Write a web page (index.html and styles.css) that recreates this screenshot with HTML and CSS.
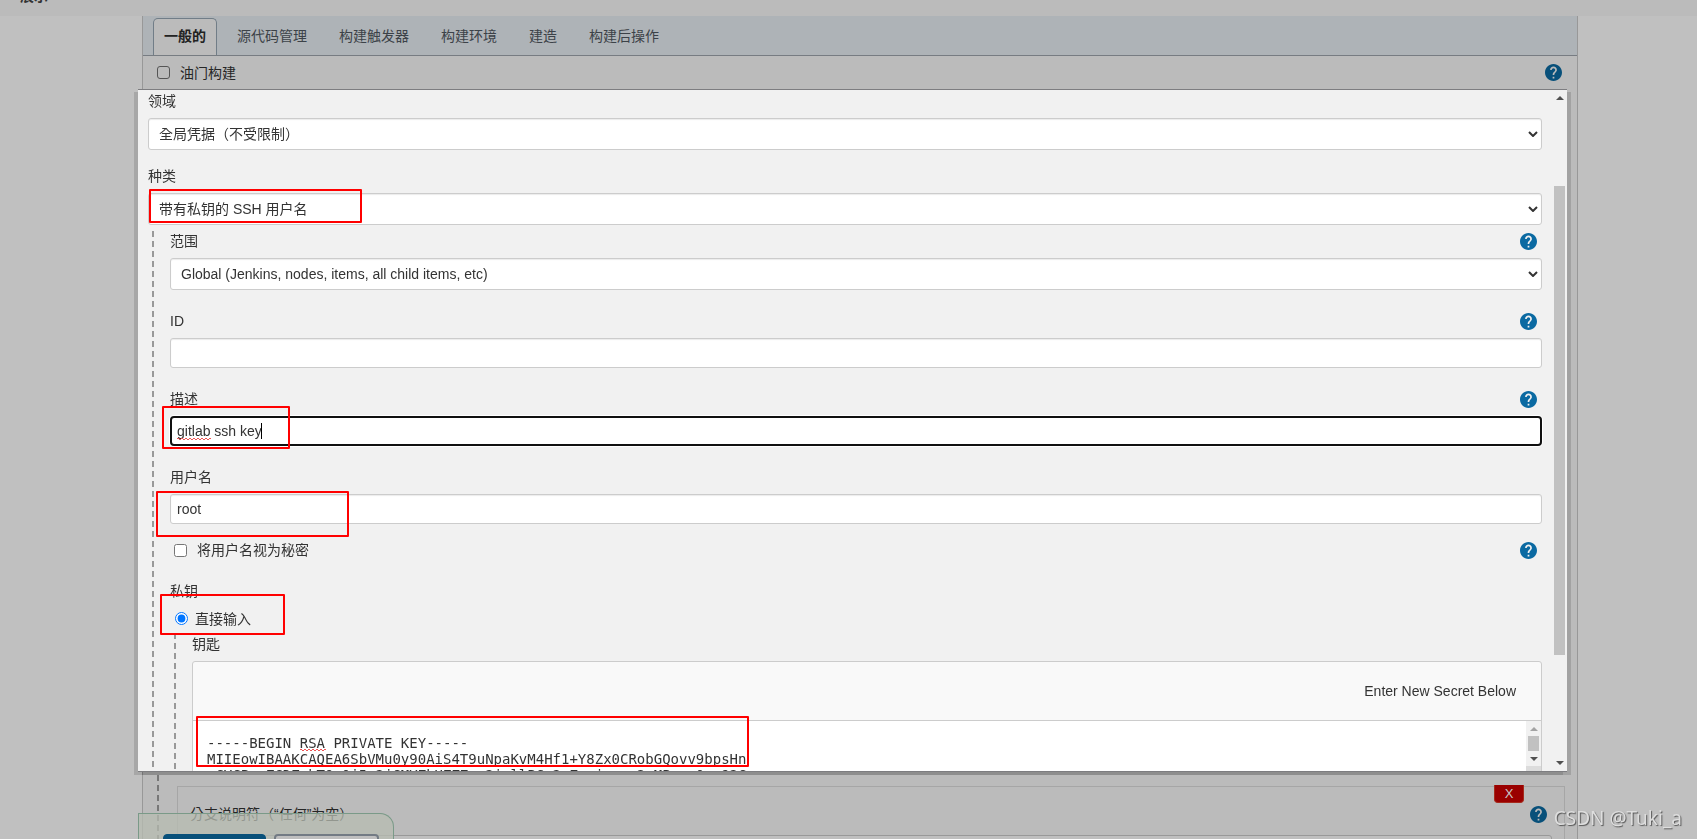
FILE: index.html
```html
<!DOCTYPE html>
<html lang="zh-CN">
<head>
<meta charset="utf-8">
<title>展示</title>
<link rel="stylesheet" href="styles.css">
</head>
<body>
<svg class="defs" aria-hidden="true">
  <symbol id="help" viewBox="2 2 20 20"><path fill="currentColor" d="M12 2C6.480 2 2 6.480 2 12s4.480 10 10 10 10-4.480 10-10S17.520 2 12 2zm1 17h-2v-2h2v2zm2.070-7.750l-.9.920C13.450 12.900 13 13.500 13 15h-2v-.5c0-1.100.45-2.100 1.170-2.830l1.240-1.260c.37-.36.590-.86.590-1.410 0-1.100-.9-2-2-2s-2 .9-2 2H8c0-2.210 1.790-4 4-4s4 1.790 4 4c0 .88-.36 1.680-.93 2.250z"/></symbol>
</svg>

<div class="page">
  <header class="breadcrumb"><span>展示 ›</span></header>
  <main class="config">
    <nav class="tabs">
      <a class="tab tab-active" href="#general">一般的</a>
      <a class="tab" href="#scm">源代码管理</a>
      <a class="tab" href="#triggers">构建触发器</a>
      <a class="tab" href="#env">构建环境</a>
      <a class="tab" href="#build">建造</a>
      <a class="tab" href="#post">构建后操作</a>
    </nav>
    <div class="option-row">
      <input type="checkbox" id="throttle"><label for="throttle">油门构建</label>
      <button class="help" aria-label="帮助"><svg><use href="#help"/></svg></button>
    </div>
    <section class="branches">
      <div class="branches-head"><span>构建分支</span><button class="help" aria-label="帮助"><svg><use href="#help"/></svg></button></div>
      <div class="branch">
        <button class="remove">X</button>
        <div class="branch-label"><label class="wide-parens" lang="zh-Hant" for="branch">分支说明符（“任何”为空）</label><button class="help" aria-label="帮助"><svg><use href="#help"/></svg></button></div>
        <input class="branch-input" id="branch" type="text">
      </div>
    </section>
  </main>
</div>

<div class="save-bar"><button class="save">保存</button><button class="apply">应用</button></div>

<div class="dialog" role="dialog" aria-label="添加凭据">
  <form class="form">
    <div class="field">
      <div class="field-head"><label for="domain">领域</label></div>
      <div class="select-wrap"><select class="wide-parens" lang="zh-Hant" id="domain"><option>全局凭据（不受限制）</option></select><svg class="chevron" viewBox="0 0 10 6"><path d="M1 1l4 4 4-4"/></svg></div>
    </div>
    <div class="field">
      <div class="field-head"><label for="kind">种类</label></div>
      <div class="select-wrap"><select id="kind"><option>带有私钥的 SSH 用户名</option></select><svg class="chevron" viewBox="0 0 10 6"><path d="M1 1l4 4 4-4"/></svg></div>
    </div>
    <div class="nest">
      <div class="nest-field">
        <div class="field-head"><label for="scope">范围</label><button type="button" class="help" aria-label="帮助"><svg><use href="#help"/></svg></button></div>
        <div class="select-wrap"><select id="scope"><option>Global (Jenkins, nodes, items, all child items, etc)</option></select><svg class="chevron" viewBox="0 0 10 6"><path d="M1 1l4 4 4-4"/></svg></div>
      </div>
      <div class="nest-field">
        <div class="field-head"><label for="cid">ID</label><button type="button" class="help" aria-label="帮助"><svg><use href="#help"/></svg></button></div>
        <input class="text" id="cid" type="text">
      </div>
      <div class="nest-field">
        <div class="field-head"><label for="desc">描述</label><button type="button" class="help" aria-label="帮助"><svg><use href="#help"/></svg></button></div>
        <div class="text-wrap"><input class="text text-focus" id="desc" type="text" value="gitlab ssh key" spellcheck="false"><span class="squiggle squiggle-desc"></span><span class="caret"></span></div>
      </div>
      <div class="nest-field">
        <div class="field-head"><label for="user">用户名</label></div>
        <input class="text" id="user" type="text" value="root" spellcheck="false">
      </div>
      <div class="check-row">
        <input type="checkbox" id="secret"><label for="secret">将用户名视为秘密</label>
        <button type="button" class="help" aria-label="帮助"><svg><use href="#help"/></svg></button>
      </div>
      <div class="nest-field">
        <div class="field-head"><span>私钥</span></div>
        <div class="radio-row"><input type="radio" id="direct" name="source" checked><label for="direct">直接输入</label></div>
      </div>
      <div class="nest">
        <div class="field-head"><label for="key">钥匙</label></div>
        <div class="secret">
          <div class="secret-head">Enter New Secret Below</div>
          <div class="secret-body">
            <textarea id="key" wrap="off" spellcheck="false">-----BEGIN RSA PRIVATE KEY-----
MIIEowIBAAKCAQEA6SbVMu0y90AiS4T9uNpaKvM4Hf1+Y8Zx0CRobGQovv9bpsHn
sCYCPs+ZCDZuhTOs0j5n2jGMYZhHZZZxs2jsllPCs2nZuvjxnsn2sMPrus0xs92C</textarea>
            <span class="squiggle squiggle-key"></span>
            <div class="mini-scroll"><i class="arrow up muted"></i><i class="mini-thumb"></i><i class="arrow down"></i><i class="corner"></i></div>
          </div>
        </div>
      </div>
    </div>
  </form>
  <div class="scrollbar"><i class="arrow up"></i><div class="track"><i class="before"></i><i class="thumb"></i><i class="after"></i></div><i class="arrow down"></i></div>
</div>

<div class="mark mark-kind"></div>
<div class="mark mark-desc"></div>
<div class="mark mark-user"></div>
<div class="mark mark-direct"></div>
<div class="mark mark-key"></div>
<div class="watermark">CSDN @Tuki_a</div>
</body>
</html>
```
FILE: styles.css
```css
* { box-sizing: border-box; }
body {
  margin: 0;
  background: #c0c0c0;
  color: #333;
  font: 14px/18px "Liberation Sans", "Noto Sans CJK SC", sans-serif;
  overflow: hidden;
}
.defs { position: absolute; width: 0; height: 0; }
button, input, select, textarea { font: inherit; color: inherit; margin: 0; }
.wide-parens { font-family: "Liberation Sans", "Noto Sans CJK TC", sans-serif; }
.page { display: flex; flex-direction: column; height: 100vh; overflow: hidden; }

.breadcrumb {
  display: flex;
  align-items: flex-end;
  flex: none;
  height: 16px;
  padding: 0 20px 11px;
  background: #bbb;
  font-weight: bold;
  overflow: hidden;
}
.config {
  display: flex;
  flex-direction: column;
  flex: 1;
  min-height: 0;
  margin: 0 119px 0 142px;
  background: #bbb;
  border: solid #989898;
  border-width: 0 1px;
}
.tabs {
  display: flex;
  flex: none;
  height: 40px;
  padding: 2px 10px 0;
  background: #aeb3b7;
  border-bottom: 1px solid #777c82;
  gap: 8px;
}
.tab { padding: 9px 12px; color: #3c4248; text-decoration: none; line-height: 18px; }
.tab-active {
  padding: 8px 10px;
  background: #bbb;
  border: 1px solid #717d87;
  border-bottom: 0;
  border-radius: 5px 5px 0 0;
  color: #222;
  font-weight: bold;
}
.option-row { display: flex; align-items: center; height: 32px; padding: 0 15px 0 14px; }
.option-row input { width: 13px; height: 13px; margin-right: 10px; appearance: none; border: 1px solid #555; border-radius: 3px; }
.option-row label { color: #262626; padding-top: 1px; }

.help { display: block; flex: none; width: 17px; height: 17px; margin-left: auto; padding: 0; border: 0; background: none; color: #0b6aa2; }
.help svg { display: block; width: 17px; height: 17px; }
.config .help { color: #08507a; }

.branches {
  margin: auto 12px 0 14px;
  height: 84px;
  padding-left: 17px;
  background: repeating-linear-gradient(#777 0 6px, transparent 6px 10px) 0 0 / 2px 100% no-repeat;
}
.branches-head { display: flex; color: #262626; height: 31px; }
.branch { margin-left: 3px; border: 1px solid #a6a6a6; height: 200px; padding: 0 12px; }
.remove {
  display: block;
  width: 30px;
  height: 18px;
  margin: -2px 28px 0 auto;
  padding: 0;
  border: 1px solid #a52a1c;
  border-top: 0;
  border-radius: 0 0 4px 4px;
  background: #9a0000;
  color: #c8c8c8;
  font-size: 13px;
  line-height: 15px;
}
.branch-label { display: flex; align-items: center; height: 18px; margin: 2px 5px 12px 0; color: #262626; }
.branch-input { width: 100%; height: 30px; border: 1px solid #999; border-radius: 3px; background: #bfbfbf; }

.save-bar {
  position: fixed;
  left: 138px;
  bottom: 0;
  display: flex;
  gap: 8px;
  width: 256px;
  height: 26px;
  padding: 20px 14px 0 24px;
  border: 1px solid #7a9a88;
  border-bottom: 0;
  border-radius: 0 14px 0 0;
  background: rgba(183, 188, 178, .75);
  overflow: hidden;
}
.save-bar button { flex: 1; height: 32px; border-radius: 4px; }
.save { border: 1px solid #08507a; background: #08507a; color: #ddd; }
.apply { border: 2px solid #737b84; background: #bfbfbf; }

.dialog {
  position: fixed;
  top: 89px;
  right: 130px;
  bottom: 67px;
  left: 138px;
  display: flex;
  background: #f1f1f1;
  border: solid #7d7d80;
  border-width: 1px 0;
  box-shadow: -4px 3px 0 rgba(0, 0, 0, .13), 4px 3px 0 rgba(0, 0, 0, .13);
}
.form { flex: 1; min-width: 0; padding: 2px 10px 0; overflow: hidden; }
.field { margin-bottom: 17px; }
.field-head { display: flex; align-items: center; height: 18px; margin-bottom: 8px; padding-right: 5px; }
.select-wrap, .text-wrap { position: relative; display: flex; }
select {
  width: 100%;
  height: 32px;
  padding: 0 10px;
  appearance: none;
  border: 1px solid #ccc;
  border-radius: 3px;
  background: #fff;
  box-shadow: inset 0 1px 1px rgba(0, 0, 0, .08);
}
.chevron { position: absolute; right: 4px; top: 13px; width: 10px; height: 6px; fill: none; stroke: #333; stroke-width: 2; }
.text {
  display: block;
  width: 100%;
  height: 30px;
  padding: 0 6px;
  border: 1px solid #ccc;
  border-radius: 3px;
  background: #fff;
  box-shadow: inset 0 1px 1px rgba(0, 0, 0, .08);
}
.text-focus { border: 2px solid #101010; border-radius: 4px; padding: 0 5px; outline: 0; box-shadow: 0 0 0 1px #fff; }
.nest {
  margin: -11px 0 0 4px;
  padding: 1px 0 0 18px;
  background: repeating-linear-gradient(#999 0 6px, transparent 6px 10px) 0 0 / 2px 100% no-repeat;
}
.nest .nest { margin-top: -18px; padding-top: 2px; }
.nest-field { margin-bottom: 22px; }
.check-row { display: flex; align-items: center; margin: -5px 0 23px; padding: 0 5px 0 4px; height: 18px; }
.check-row input { width: 13px; height: 13px; }
.check-row label { margin-left: 10px; }
.radio-row { display: flex; align-items: center; height: 21px; padding-left: 5px; gap: 7px; }
.radio-row input { width: 13px; height: 13px; }
.radio-row label { padding-top: 1px; }

.secret { border: 1px solid #ccc; border-radius: 3px; background: #f9f9f9; }
.secret-head { display: flex; align-items: center; justify-content: flex-end; height: 59px; padding-right: 25px; border-bottom: 1px solid #ccc; }
.secret-body { position: relative; display: flex; height: 60px; }
textarea {
  flex: 1;
  min-width: 0;
  padding: 14px;
  border: 0;
  resize: none;
  background: #fff;
  font: 14px/16px "DejaVu Sans Mono", monospace;
  overflow: hidden;
}
.mini-scroll { display: flex; flex-direction: column; align-items: center; width: 15px; background: #f1f1f1; }
.mini-thumb { width: 11px; height: 15px; background: #c1c1c1; }
.mini-scroll .arrow { height: 15px; }
.corner { width: 15px; height: 15px; background: #dcdcdc; }

.scrollbar { display: flex; flex-direction: column; align-items: center; width: 15px; background: #f1f1f1; }
.track { display: flex; flex-direction: column; flex: 1; width: 11px; }
.before { flex: 80; }
.thumb { flex: 470; background: #c1c1c1; }
.after { flex: 100; }
.arrow { display: flex; align-items: center; justify-content: center; flex: none; width: 15px; height: 16px; }
.arrow::before { content: ""; border: solid transparent; border-width: 0 4px 4px; border-bottom-color: #505050; }
.arrow.down::before { border-width: 4px 4px 0; border-top-color: #505050; }
.arrow.muted::before { border-bottom-color: #a3a3a3; }

.squiggle {
  position: absolute;
  height: 2px;
  background:
    repeating-linear-gradient(90deg, #e55 0 2px, transparent 2px 4px) 0 0 / 100% 1px no-repeat,
    repeating-linear-gradient(90deg, transparent 0 2px, #e55 2px 4px) 0 1px / 100% 1px no-repeat;
}
.squiggle-desc { left: 7px; top: 22px; width: 34px; }
.squiggle-key { left: 107px; top: 28px; width: 26px; }
.caret { position: absolute; left: 91px; top: 7px; width: 1px; height: 16px; background: #000; }

.mark { position: fixed; border: 2px solid #f00; border-radius: 1px; pointer-events: none; }
.mark-kind { left: 149px; top: 189px; width: 213px; height: 34px; }
.mark-desc { left: 162px; top: 406px; width: 128px; height: 43px; }
.mark-user { left: 156px; top: 491px; width: 193px; height: 46px; }
.mark-direct { left: 160px; top: 594px; width: 125px; height: 41px; }
.mark-key { left: 196px; top: 716px; width: 553px; height: 51px; }
.watermark {
  position: fixed;
  right: 15px;
  bottom: 8px;
  color: #dedede;
  font: 19px/26px "Noto Sans", sans-serif;
  text-shadow: 1px 1px 1px #555;
}
```
